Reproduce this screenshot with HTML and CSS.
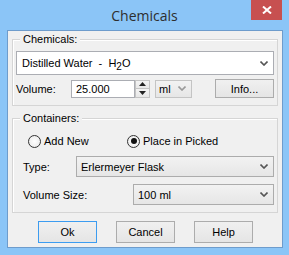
FILE: index.html
```html
<!DOCTYPE html>
<html>
    <head>
        <meta charset="utf-8">
        <title>Chemicals</title>
        <link rel="stylesheet" href="styles.css">
    </head>
    <body>
        <div class="window">
            <div class="titlebar">
                <span></span>
                <span class="title">Chemicals</span>
                <span class="close">
                    <svg width="10" height="8" viewBox="0 0 10 8">
                        <path d="M1 0.5 L9 7.5 M9 0.5 L1 7.5" stroke="#fff" stroke-width="2"/>
                    </svg>
                </span>
            </div>

            <div class="client">
                <div class="group group-chem">
                    <span class="legend">Chemicals:</span>
                    <div class="combo combo-white">
                        <span>Distilled Water &nbsp;-&nbsp; H<span class="sub">2</span>O</span>
                        <svg class="chev" width="8" height="5" viewBox="0 0 8 5"><path d="M0.5 0.5 L4 4 L7.5 0.5" fill="none" stroke="#555" stroke-width="1.6"/></svg>
                    </div>
                    <div class="vol-row">
                        <span class="lbl lbl-vol">Volume:</span>
                        <span class="edit">25.000</span>
                        <span class="spin">
                            <span class="spin-btn"><svg width="7" height="4" viewBox="0 0 7 4"><path d="M3.5 0 L7 4 L0 4 Z" fill="#222"/></svg></span>
                            <span class="spin-btn"><svg width="7" height="4" viewBox="0 0 7 4"><path d="M0 0 L7 0 L3.5 4 Z" fill="#222"/></svg></span>
                        </span>
                        <div class="combo combo-ml">
                            <span>ml</span>
                            <svg class="chev" width="8" height="5" viewBox="0 0 8 5"><path d="M0.5 0.5 L4 4 L7.5 0.5" fill="none" stroke="#999" stroke-width="1.6"/></svg>
                        </div>
                        <button class="btn btn-info">Info...</button>
                    </div>
                </div>

                <div class="group group-cont">
                    <span class="legend">Containers:</span>
                    <div class="radio-row">
                        <span class="radio radio-add">
                            <span class="dot"></span>Add New
                        </span>
                        <span class="radio radio-place">
                            <span class="dot checked"></span>Place in Picked
                        </span>
                    </div>
                    <div class="field-row row-type">
                        <span class="lbl lbl-type">Type:</span>
                        <div class="combo combo-gray combo-type">
                            <span>Erlermeyer Flask</span>
                            <svg class="chev" width="8" height="5" viewBox="0 0 8 5"><path d="M0.5 0.5 L4 4 L7.5 0.5" fill="none" stroke="#555" stroke-width="1.6"/></svg>
                        </div>
                    </div>
                    <div class="field-row row-size">
                        <span class="lbl lbl-size">Volume Size:</span>
                        <div class="combo combo-gray combo-size">
                            <span>100 ml</span>
                            <svg class="chev" width="8" height="5" viewBox="0 0 8 5"><path d="M0.5 0.5 L4 4 L7.5 0.5" fill="none" stroke="#555" stroke-width="1.6"/></svg>
                        </div>
                    </div>
                </div>

                <div class="btn-row">
                    <button class="btn btn-ok">Ok</button>
                    <button class="btn">Cancel</button>
                    <button class="btn">Help</button>
                </div>
            </div>
        </div>
    </body>
</html>
```

FILE: styles.css
```css
body {
    margin: 0;
    font-family: "Liberation Sans", Arial, sans-serif;
    font-size: 11px;
    color: #000;
}
.window {
    width: 289px;
    height: 255px;
    box-sizing: border-box;
    background: #8bc5f7;
    display: flex;
    flex-direction: column;
}
.titlebar {
    height: 30px;
    display: grid;
    grid-template-columns: 1fr auto 1fr;
}
.title {
    font-family: "Open Sans", sans-serif;
    font-size: 14px;
    line-height: 31px;
    color: #2e2e2e;
}
.close {
    justify-self: end;
    align-self: start;
    width: 31px;
    height: 20px;
    margin-right: 7px;
    background: #c75050;
    display: flex;
    align-items: center;
    justify-content: center;
}
.client {
    flex: 1;
    margin: 0 6px 7px 7px;
    border: 1px solid #6e9ccc;
    background: #f0f0f0;
    padding: 0 4px;
}

/* group boxes */
.group {
    border: 1px solid #d5d5d5;
    box-shadow: inset 1px 1px 0 #fff;
    padding: 0 3px;
}
.group-chem {
    margin-top: 8px;
    padding-bottom: 7px;
}
.group-cont {
    margin-top: 12px;
    padding-bottom: 7px;
}
.legend {
    display: block;
    width: max-content;
    margin: -7px 0 0 4px;
    padding: 0 3px;
    line-height: 13px;
    background: #f0f0f0;
}

/* combos */
.combo {
    display: flex;
    align-items: center;
    justify-content: space-between;
    box-sizing: border-box;
    border: 1px solid #acacac;
    padding: 0 5px 0 4px;
}
.combo-white {
    margin-top: 5px;
    height: 24px;
    background: #fff;
    border-color: #abadb3;
    padding-left: 5px;
}
.combo-gray {
    height: 21px;
    background: linear-gradient(#f2f2f2, #e6e6e6);
}
.sub {
    position: relative;
    top: 3px;
    font-size: 10px;
}

.vol-row {
    margin-top: 4px;
    height: 19px;
    display: flex;
    align-items: center;
}
.lbl-vol {
    width: 55px;
}
.edit {
    box-sizing: border-box;
    width: 64px;
    height: 18px;
    line-height: 16px;
    border: 1px solid #abadb3;
    background: #fff;
    padding-left: 4px;
}
.spin {
    display: flex;
    flex-direction: column;
    margin-left: 0;
    width: 15px;
    height: 18px;
}
.spin-btn {
    flex: 1;
    display: flex;
    align-items: center;
    justify-content: center;
    border: 1px solid #c4c4c4;
    background: linear-gradient(#f4f4f4, #e8e8e8);
}
.spin-btn + .spin-btn {
    border-top: 0;
}
.combo-ml {
    margin-left: 5px;
    width: 37px;
    height: 18px;
    background: linear-gradient(#f2f2f2, #e6e6e6);
    border-color: #c4c4c4;
    padding: 0 5px 0 3px;
}

/* buttons */
.btn {
    box-sizing: border-box;
    width: 59px;
    height: 22px;
    padding: 0;
    font-family: "Liberation Sans", Arial, sans-serif;
    font-size: 11px;
    color: #000;
    border: 1px solid #acacac;
    border-radius: 0;
    background: linear-gradient(#f0f0f0, #e5e5e5);
}
.btn-info {
    margin-left: auto;
    height: 19px;
}
.btn-ok {
    border-color: #3c9cf0;
}
.btn-row {
    margin-top: 8px;
    display: flex;
    justify-content: center;
    gap: 19px;
    padding-left: 1px;
}

/* containers group */
.radio-row {
    margin-top: 9px;
    height: 14px;
    display: flex;
    align-items: center;
}
.radio {
    display: flex;
    align-items: center;
}
.radio-add {
    margin-left: 12px;
    width: 99px;
}
.dot {
    box-sizing: border-box;
    width: 13px;
    height: 13px;
    margin-right: 3px;
    border: 1px solid #333;
    border-radius: 50%;
    background: radial-gradient(#fff, #e6e6e6);
    display: flex;
    align-items: center;
    justify-content: center;
}
.dot.checked::after {
    content: "";
    width: 6px;
    height: 6px;
    border-radius: 50%;
    background: #111;
}
.field-row {
    display: flex;
    align-items: center;
}
.row-type {
    margin-top: 8px;
}
.row-size {
    margin-top: 7px;
}
.lbl-type,
.lbl-size {
    padding-left: 7px;
}
.lbl-type {
    width: 53px;
}
.lbl-size {
    width: 110px;
}
.combo-type,
.combo-size {
    flex: 1;
}
```
